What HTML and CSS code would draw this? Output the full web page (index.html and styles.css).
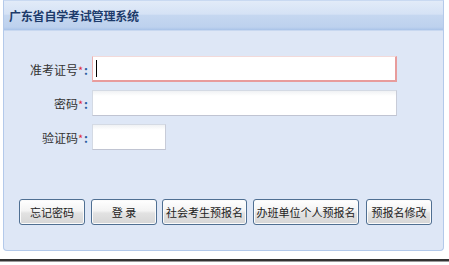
FILE: index.html
```html
<!DOCTYPE html>
<html lang="zh-CN">
<head>
<meta charset="UTF-8">
<title>广东省自学考试管理系统</title>
<link rel="stylesheet" href="styles.css">
</head>
<body>
<div class="panel">
    <div class="panel-head">
        <h1 class="panel-title">广东省自学考试管理系统</h1>
    </div>
    <form class="login-form">
        <div class="field">
            <label class="field-label">准考证号<span class="req">*</span><span class="colon">:</span></label>
            <span class="input-wrap">
                <input class="text-input wide focused" type="text">
                <span class="caret"></span>
            </span>
        </div>
        <div class="field">
            <label class="field-label">密码<span class="req">*</span><span class="colon">:</span></label>
            <input class="text-input wide" type="password">
        </div>
        <div class="field">
            <label class="field-label">验证码<span class="req">*</span><span class="colon">:</span></label>
            <input class="text-input short" type="text">
        </div>
        <div class="actions">
            <button type="button" class="btn b1">忘记密码</button>
            <button type="button" class="btn b2">登 录</button>
            <button type="button" class="btn b3">社会考生预报名</button>
            <button type="button" class="btn b4">办班单位个人预报名</button>
            <button type="button" class="btn b5">预报名修改</button>
        </div>
    </form>
</div>
<div class="page-rule"></div>
</body>
</html>
```

FILE: styles.css
```css
body {
    margin: 0;
    background: #fff;
    font-family: "Noto Sans CJK SC", "Liberation Sans", sans-serif;
    color: #333;
}
.panel {
    margin: 0 3px 0 3px;
    width: 441px;
    height: 251px;
    border: 1px solid #b3c9ea;
    border-top-color: #c9d9f1;
    border-radius: 0 0 4px 4px;
    background: #dee7f6;
    box-sizing: border-box;
}
.panel-head {
    height: 30px;
    background: linear-gradient(to bottom, #e2ebf8 0%, #d5e2f5 45%, #c5d7f0 50%, #bdd1ee 90%, #a9c3e8 100%);
    border-bottom: 1px solid #c8d8f0;
    display: flex;
    align-items: center;
    box-sizing: border-box;
}
.panel-title {
    margin: 0 0 0 5px;
    font-size: 12px;
    font-weight: bold;
    color: #1d3b6b;
    letter-spacing: -0.2px;
}
.login-form {
    padding-top: 25px;
}
.field {
    display: flex;
    align-items: center;
    height: 26px;
    margin-bottom: 8px;
}
.field-label {
    width: 84px;
    text-align: right;
    font-size: 12px;
    color: #333;
    padding-right: 4px;
}
.req {
    color: #e0303a;
    font-size: 11px;
}
.colon {
    color: #2a5d9e;
    font-weight: bold;
    margin-left: 1px;
}
.input-wrap {
    position: relative;
    display: flex;
}
.text-input {
    height: 26px;
    box-sizing: border-box;
    border: 1px solid #d4dae4;
    border-bottom-color: #c0c4d2;
    border-right-color: #c8ccd8;
    background: linear-gradient(to bottom, #f0f2f4 0, #fff 5px);
    margin: 0;
    padding: 0 4px;
    outline: none;
}
.text-input.wide {
    width: 305px;
}
.text-input.short {
    width: 74px;
}
.text-input.focused {
    border-color: #ebb0b0;
    border-top-color: #f2dada;
    border-bottom: 2px solid #e89c9c;
    border-right: 2px solid #e89c9c;
    background: #fff;
}
.caret {
    position: absolute;
    left: 4px;
    top: 4px;
    width: 1px;
    height: 17px;
    background: #000;
}
.actions {
    display: flex;
    gap: 6px;
    margin-top: 49px;
    padding-left: 15px;
}
.btn {
    height: 26px;
    border: 1px solid #4f6f92;
    border-radius: 3px;
    background: linear-gradient(to bottom, #ffffff 0%, #f3f3f3 45%, #e2e2e2 55%, #d6d6d6 100%);
    font-family: "Noto Sans CJK SC", sans-serif;
    font-size: 11px;
    color: #222;
    padding: 0;
    box-shadow: inset 0 0 0 1px #fbfbfb;
}
.b1 { width: 66px; }
.b2 { width: 66px; }
.b3 { width: 85px; margin-left: -1px; }
.b4 { width: 106px; }
.b5 { width: 66px; margin-left: 1px; }
.page-rule {
    margin-top: 8px;
    height: 2px;
    background: #333;
    border-bottom: 1px solid #999;
}
```
